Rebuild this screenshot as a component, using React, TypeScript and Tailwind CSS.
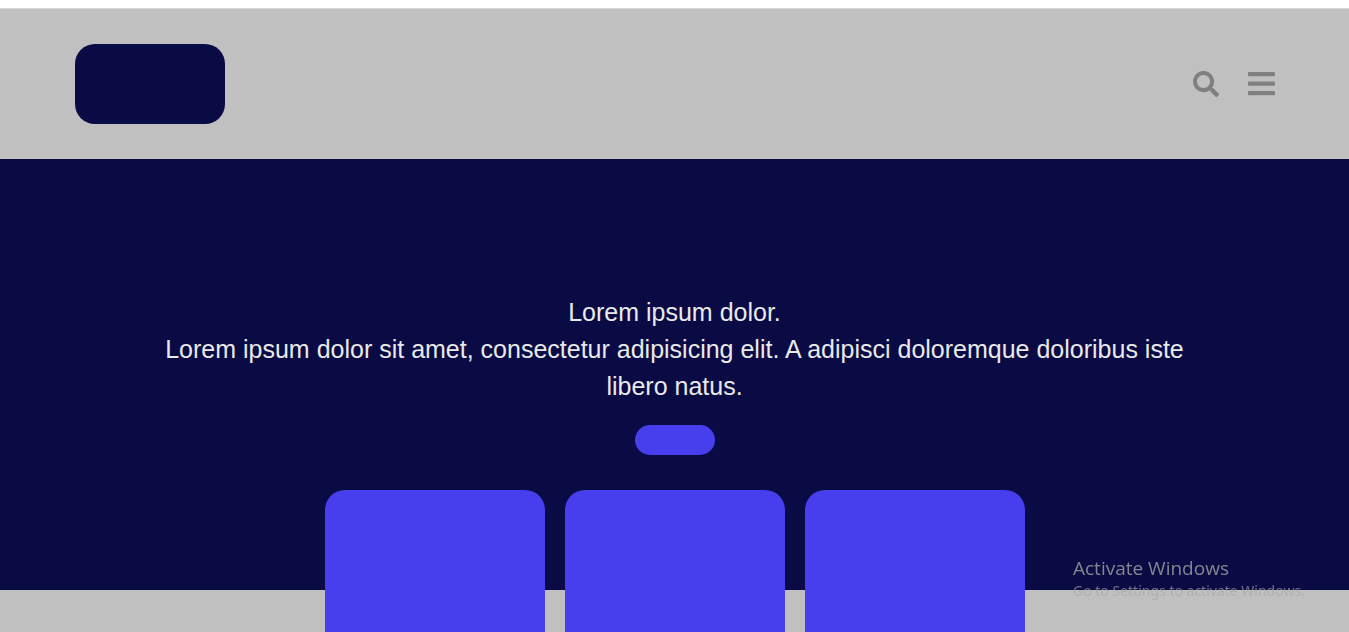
import { FaSearch } from "react-icons/fa";

const cards = ["first", "second", "third"];

function BarsIcon() {
  return (
    <svg viewBox="0 0 27 24" className="h-6 w-[27px]" fill="currentColor" aria-hidden="true">
      <rect x="0" y="0" width="27" height="4.2" rx="0.8" />
      <rect x="0" y="9.6" width="27" height="4.2" rx="0.8" />
      <rect x="0" y="19" width="27" height="4.2" rx="0.8" />
    </svg>
  );
}

function Header() {
  return (
    <header className="flex h-[150px] items-center justify-between bg-[#c0c0c0] pr-[74px] pl-[75px]">
      <a href="#home" aria-label="Home" className="h-20 w-[150px] rounded-[20px] bg-[#0a0b45]" />
      <nav className="flex items-center gap-[29px] text-[#808080]">
        <button type="button" aria-label="Search">
          <FaSearch className="h-[26px] w-[26px]" />
        </button>
        <button type="button" aria-label="Menu">
          <BarsIcon />
        </button>
      </nav>
    </header>
  );
}

function Hero() {
  return (
    <section className="flex flex-col items-center bg-[#0a0b45] px-[150px] pt-[135px] pb-[135px] text-center text-[25px] leading-[37px] text-[#e9e9e9]">
      <h1>Lorem ipsum dolor.</h1>
      <p>
        Lorem ipsum dolor sit amet, consectetur adipisicing elit. A adipisci doloremque doloribus iste
        libero natus.
      </p>
      <button type="button" aria-label="Learn more" className="mt-5 h-[30px] w-20 rounded-full bg-[#473fee]" />
    </section>
  );
}

export default function App() {
  return (
    <div className="flex min-h-screen flex-col border-t-8 border-white bg-[#c0c0c0] font-['Liberation_Sans',Arial,sans-serif]">
      <div className="h-px bg-[#d8d8d8]" />
      <Header />
      <Hero />
      <main className="-mt-[100px] flex grow justify-center gap-5">
        {cards.map((card) => (
          <article key={card} className="w-[220px] rounded-t-[20px] bg-[#473fee]" />
        ))}
      </main>
      <aside className="pointer-events-none fixed right-10 bottom-[30px] w-[236px] whitespace-nowrap font-['Open_Sans','Noto_Sans',sans-serif] text-[#9b9b9b]/85">
        <p className="text-[19px] leading-6">Activate Windows</p>
        <p className="font-['Noto_Sans',sans-serif] text-[14px] leading-[22px] text-[#a8a8a8]/65">
          Go to Settings to activate Windows.
        </p>
      </aside>
    </div>
  );
}
